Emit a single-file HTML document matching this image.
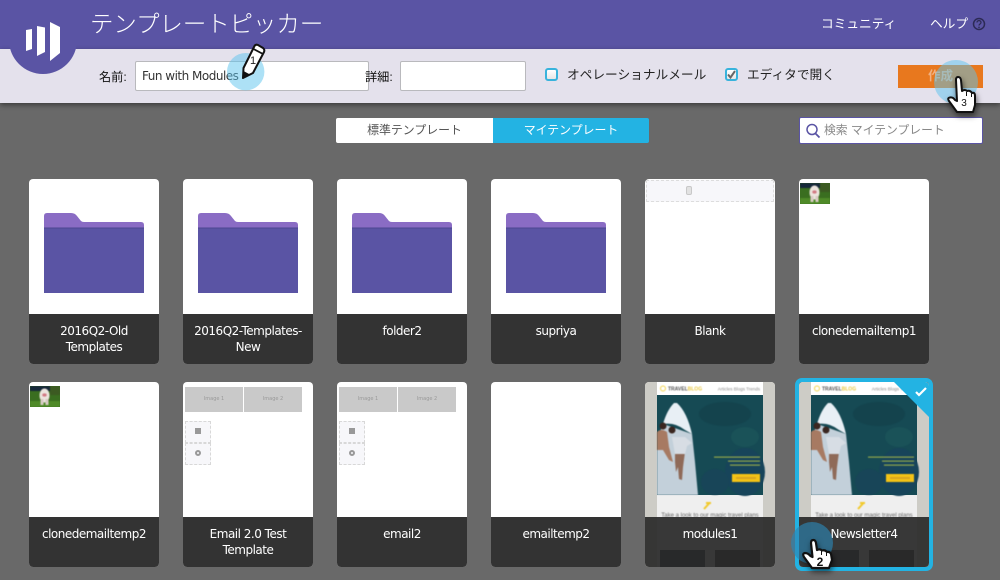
<!DOCTYPE html>
<html lang="ja"><head><meta charset="utf-8"><title>テンプレートピッカー</title>
<style>
*{box-sizing:border-box}
html,body{margin:0;padding:0}
body{width:1000px;height:580px;position:relative;overflow:hidden;background:#696969;font-family:"DejaVu Sans","Noto Sans CJK JP",sans-serif;font-size:12px;color:#222}
.abs{position:absolute;white-space:nowrap}
.jp{font-family:"Liberation Sans","Noto Sans CJK JP",sans-serif}
#hd{position:absolute;left:0;top:0;width:1000px;height:49px;background:#5a54a4}
#bar{position:absolute;left:0;top:49px;width:1000px;height:54px;background:#e4e1ec;box-shadow:0 2px 5px rgba(0,0,0,.45)}
.in{position:absolute;background:#fff;border:1px solid #b9b9bd;border-radius:2px}
.cb{position:absolute;width:13px;height:13px;border:2px solid #38b3dc;border-radius:3px;background:linear-gradient(#fff,#e6e6e6)}
.card{position:absolute;width:130px;height:185px;background:#fff;border-radius:4px;overflow:hidden}
.lb{position:absolute;left:0;right:0;top:135px;height:50px;background:#333;color:#fff;text-align:center;font-size:12px;line-height:16px;padding:9px 0 0;font-family:"DejaVu Sans",sans-serif;letter-spacing:-.5px}
.ov{background:rgba(42,42,42,.93)}
svg{position:absolute;display:block}
.sh{filter:drop-shadow(1px 3px 3px rgba(0,0,0,.55))}
</style></head><body>
<div id="hd"></div>
<div id="bar"></div>

<svg style="left:0;top:0" width="90" height="80" viewBox="0 0 90 80">
<circle cx="43" cy="40" r="34" fill="#5a54a4"/>
<path d="M26 30 L32 29 V49 L26 51Z M37 26 L45 27.500 V52 L37 56Z M50 22 L60 27 V53 L50 61Z" fill="#fff"/>
</svg>

<div class="abs jp" style="left:90px;top:9px;font-size:23.400px;line-height:30px;color:#fff;font-weight:300">テンプレートピッカー</div>
<div class="abs jp" style="left:821px;top:15px;font-size:12.700px;line-height:18px;color:#fff">コミュニティ</div>
<div class="abs jp" style="left:930px;top:15px;font-size:12.700px;line-height:18px;color:#fff">ヘルプ</div>
<svg style="left:972px;top:17px" width="14" height="14" viewBox="0 0 14 14"><circle cx="7" cy="7" r="5.500" fill="none" stroke="#2c2a55" stroke-width="1.500"/><path d="M5 5.500c0-2.500 4-2.500 4 0 0 1.500-2 1.500-2 3" fill="none" stroke="#2c2a55" stroke-width="1.300"/><circle cx="7" cy="10.300" r=".8" fill="#2c2a55"/></svg>

<div class="abs jp" style="left:99px;top:68px;font-size:12.200px;line-height:18px;color:#111">名前:</div>
<div class="in" style="left:135px;top:61px;width:234px;height:30px"></div>
<div class="abs" style="left:142px;top:68px;font-size:12px;line-height:16px;color:#333;letter-spacing:-.5px">Fun with Modules</div>
<div class="abs jp" style="left:365px;top:68px;font-size:12.200px;line-height:18px;color:#111">詳細:</div>
<div class="in" style="left:400px;top:61px;width:126px;height:30px"></div>
<div class="cb" style="left:545px;top:68px"></div>
<div class="abs jp" style="left:567px;top:66px;font-size:12.700px;line-height:18px;color:#222">オペレーショナルメール</div>
<div class="cb" style="left:725px;top:68px"></div>
<svg style="left:725px;top:68px" width="13" height="13" viewBox="0 0 13 13"><path d="M3 6.500 5.500 9.500 10 3" fill="none" stroke="#666" stroke-width="2"/></svg>
<div class="abs jp" style="left:747px;top:66px;font-size:12.700px;line-height:18px;color:#222">エディタで開く</div>
<div class="abs" style="left:898px;top:65px;width:85px;height:23px;background:#e8781e"></div>
<div class="abs jp" style="left:898px;top:66px;width:85px;text-align:center;font-size:12.500px;line-height:20px;color:#f0b183;font-weight:bold">作成</div>

<div class="abs jp" style="left:336px;top:118px;width:157px;height:25px;background:#fff;border-radius:2px 0 0 2px;text-align:center;font-size:11.900px;line-height:25px;color:#555">標準テンプレート</div>
<div class="abs jp" style="left:493px;top:118px;width:156px;height:25px;background:#23b3e3;border-radius:0 2px 2px 0;text-align:center;font-size:11.900px;line-height:25px;color:#fff">マイテンプレート</div>

<div class="abs" style="left:799px;top:117px;width:184px;height:27px;background:#fff;border:1px solid #5a54a4;border-radius:2px"></div>
<svg style="left:804px;top:122px" width="18" height="18" viewBox="0 0 18 18"><circle cx="8" cy="7.500" r="5" fill="none" stroke="#5a54a4" stroke-width="1.500"/><path d="M11.500 11.500 15.500 15.500" stroke="#5a54a4" stroke-width="1.800"/></svg>
<div class="abs jp" style="left:824px;top:121px;font-size:11.800px;line-height:18px;color:#888">検索 マイテンプレート</div>

<svg width="0" height="0" style="position:absolute"><defs>
<symbol id="fold" viewBox="0 0 100 80">
<path d="M0 20V3Q0 0 3 0H27Q31 0 33 3L37 8Q38 9 40 9H97Q100 9 100 12V20Z" fill="#8a6cc4"/>
<path d="M0 15H100V80H0Z" fill="#5a54a4"/><path d="M0 15H100" stroke="#4c4690" stroke-width="1"/>
</symbol>
<symbol id="pig" viewBox="0 0 30 21">
<rect width="30" height="21" fill="#3a6e20"/>
<g style="filter:blur(.6px)">
<rect width="30" height="5" fill="#16283a"/><rect x="20" width="10" height="9" fill="#3c5a22"/><rect y="15" width="30" height="6" fill="#4f8a28"/>
<ellipse cx="14.500" cy="9.500" rx="5" ry="7" fill="#ece4de"/><rect x="10.500" y="13" width="3" height="6" fill="#d8cbc4"/><rect x="15.500" y="13" width="3" height="6" fill="#d8cbc4"/><ellipse cx="14.500" cy="9" rx="2.200" ry="1.600" fill="#d27a84"/>
</g>
</symbol>
<symbol id="mail" viewBox="0 0 130 185">
<rect width="130" height="185" fill="#cdccc6"/>
<rect x="12" y="0" width="106" height="13" fill="#fff"/>
<rect x="12" y="13" width="106" height="100" fill="#164a54"/>
<rect x="12" y="113" width="106" height="72" fill="#efefef"/>
<g style="filter:blur(.5px)">
<circle cx="18" cy="6.500" r="2.500" fill="none" stroke="#f3d54e"/>
<text x="23" y="8.500" font-family="Liberation Sans, sans-serif" font-size="5" font-weight="bold" fill="#555">TRAVEL<tspan fill="#e9c944">BLOG</tspan></text>
<text x="115" y="8.500" text-anchor="end" font-family="Liberation Sans, sans-serif" font-size="4.500" fill="#888">Articles Blogs Trends</text>
<ellipse cx="80" cy="32" rx="26" ry="12" fill="#14434d"/><ellipse cx="100" cy="90" rx="20" ry="24" fill="#17445a"/><ellipse cx="70" cy="100" rx="14" ry="13" fill="#184558"/><ellipse cx="100" cy="55" rx="14" ry="10" fill="#1a5258"/>
<path d="M12 58 L18 42 L47 52 L50 80 L53 113 H12Z" fill="#c3d0da"/>
<path d="M18 42 Q22 28 29 21 L32 21 Q42 30 47 52 L40 48 Q30 40 18 42Z" fill="#e8eff5"/>
<path d="M12 50 Q16 46 22 50 L24 65 L28 80 L24 78 L18 68 L12 68Z" fill="#a77a62"/>
<circle cx="18" cy="44" r="3.500" fill="#3a2620"/><circle cx="27" cy="48" r="3.500" fill="#3a2620"/>
<path d="M30 70 L40 70 L38 85 L37 98 L34 97 L33 85 L31 90 L30 80Z" fill="#8f6a58"/>
<path d="M27 55 L40 55 L47 61 L42 64 L40 72 L30 72Z" fill="#d7dde4"/>
<rect x="69" y="74.500" width="46" height="1.200" fill="#8fa64c"/><rect x="83" y="78.500" width="32" height="1.200" fill="#8fa64c"/><rect x="85" y="82.500" width="30" height="1.200" fill="#8fa64c"/>
<rect x="87" y="92" width="28" height="8" fill="#f3c316"/><rect x="91" y="95" width="20" height="2" fill="#d9a520"/>
<path d="M59 127 64.500 121" stroke="#f1c92c" stroke-width="2"/><rect x="61" y="120" width="5" height="2" fill="#f1c92c"/>
<text x="65" y="135" text-anchor="middle" font-family="Liberation Sans, sans-serif" font-size="6" fill="#666">Take a look to our magic travel plans</text>
</g>
<rect x="15" y="168" width="45" height="17" fill="#14202a"/><rect x="70" y="168" width="45" height="17" fill="#24241f"/>
</symbol>
</defs></svg>

<div class="card" style="left:29px;top:179px"><svg style="left:15px;top:34px" width="100" height="80"><use href="#fold"/></svg><div class="lb">2016Q2-Old<br>Templates</div></div>
<div class="card" style="left:183px;top:179px"><svg style="left:15px;top:34px" width="100" height="80"><use href="#fold"/></svg><div class="lb">2016Q2-Templates-<br>New</div></div>
<div class="card" style="left:337px;top:179px"><svg style="left:15px;top:34px" width="100" height="80"><use href="#fold"/></svg><div class="lb">folder2</div></div>
<div class="card" style="left:491px;top:179px"><svg style="left:15px;top:34px" width="100" height="80"><use href="#fold"/></svg><div class="lb">supriya</div></div>
<div class="card" style="left:645px;top:179px">
<div class="abs" style="left:1px;top:1px;width:128px;height:22px;background:#f7f7fa;border:1px dashed #ddd"></div>
<div class="abs" style="left:41px;top:7px;width:6px;height:9px;background:#e2e2e2;border:1px solid #c8c8c8;border-radius:2px"></div>
<div class="lb">Blank</div></div>
<div class="card" style="left:799px;top:179px"><svg style="left:1px;top:4px" width="30" height="21"><use href="#pig"/></svg><div class="lb">clonedemailtemp1</div></div>

<div class="card" style="left:29px;top:382px"><svg style="left:1px;top:4px" width="30" height="21"><use href="#pig"/></svg><div class="lb">clonedemailtemp2</div></div>
<div class="card tpl" style="left:183px;top:382px">
<div class="abs" style="left:2px;top:5px;width:58px;height:25px;background:#c9c9c9;text-align:center;font-size:5px;line-height:25px;color:#999">Image 1</div>
<div class="abs" style="left:61px;top:5px;width:58px;height:25px;background:#c9c9c9;text-align:center;font-size:5px;line-height:25px;color:#999">Image 2</div>
<div class="abs" style="left:2px;top:39px;width:26px;height:22px;background:#f7f7fa;border:1px dashed #d8d8d8"></div>
<div class="abs" style="left:2px;top:61px;width:26px;height:22px;background:#f7f7fa;border:1px dashed #d8d8d8"></div>
<div class="abs" style="left:12px;top:46px;width:6px;height:6px;background:#999"></div>
<div class="abs" style="left:12px;top:68px;width:6px;height:6px;border:2px solid #999;border-radius:50%"></div>
<div class="lb">Email 2.0 Test<br>Template</div></div>
<div class="card" style="left:337px;top:382px">
<div class="abs" style="left:2px;top:5px;width:58px;height:25px;background:#c9c9c9;text-align:center;font-size:5px;line-height:25px;color:#999">Image 1</div>
<div class="abs" style="left:61px;top:5px;width:58px;height:25px;background:#c9c9c9;text-align:center;font-size:5px;line-height:25px;color:#999">Image 2</div>
<div class="abs" style="left:2px;top:39px;width:26px;height:22px;background:#f7f7fa;border:1px dashed #d8d8d8"></div>
<div class="abs" style="left:2px;top:61px;width:26px;height:22px;background:#f7f7fa;border:1px dashed #d8d8d8"></div>
<div class="abs" style="left:12px;top:46px;width:6px;height:6px;background:#999"></div>
<div class="abs" style="left:12px;top:68px;width:6px;height:6px;border:2px solid #999;border-radius:50%"></div>
<div class="lb">email2</div></div>
<div class="card" style="left:491px;top:382px"><div class="lb">emailtemp2</div></div>
<div class="card" style="left:645px;top:382px"><svg style="left:0;top:0" width="130" height="185"><use href="#mail"/></svg><div class="lb ov">modules1</div></div>
<div class="abs" style="left:795px;top:378px;width:138px;height:193px;border:4px solid #23b3e3;border-radius:7px"></div>
<div class="card" style="left:799px;top:382px"><svg style="left:0;top:0" width="130" height="185"><use href="#mail"/></svg>
<svg style="left:95px;top:0" width="35" height="35" viewBox="0 0 35 35"><path d="M0 0H35V35Z" fill="#23b3e3"/><path d="M22 10 25 13 32 6" fill="none" stroke="#fff" stroke-width="2.200"/></svg>
<div class="lb ov">Newsletter4</div></div>

<!-- hotspot 1 -->
<svg style="left:225px;top:40px" width="50" height="55" viewBox="0 0 50 55">
<circle cx="20.700" cy="31.700" r="18.700" fill="#5cc4ee" fill-opacity=".5"/>
<path d="M18 38 L18.500 28 L29.500 6 Q30.500 4 33 5 L38 8 Q40 9.500 39 12 L28 33Z" fill="#fff" stroke="#111" stroke-width="2" stroke-linejoin="round"/>
<path d="M18 38 L18.500 31 L25 34.500Z" fill="#111"/><path d="M28.500 9 38 14" stroke="#111" stroke-width="1.800"/>
<text x="28" y="24" font-family="Liberation Sans, sans-serif" font-size="11" fill="#222" text-anchor="middle">1</text>
</svg>
<!-- hotspot 2 -->
<svg style="left:785px;top:510px;overflow:visible" width="60" height="70" viewBox="0 0 60 70">
<circle cx="27" cy="33" r="21" fill="#2c86b4" fill-opacity=".65"/>
<path class="sh" d="M27 58 L19 47 Q17 43.500 20 43 Q23 43 25.500 46 L27.500 47 L26 33 Q26 30 28.300 30 Q30.500 30 31 33 L32 40 Q35 38.500 37 40.500 Q40 39.500 42 42 Q45 41.500 46 44 L47 50 L44 58Z" fill="#fff" stroke="#111" stroke-width="2.200" stroke-linejoin="round"/>
<path d="M36.500 41V45M41.500 42.500V46" stroke="#111" stroke-width="1"/>
<text x="35" y="56" font-family="Liberation Sans, sans-serif" font-size="12" fill="#111" text-anchor="middle" font-weight="bold">2</text>
</svg>
<!-- hotspot 3 -->
<svg style="left:930px;top:55px;overflow:visible" width="60" height="60" viewBox="0 0 60 60">
<circle cx="26" cy="27" r="22" fill="#5cc4ee" fill-opacity=".5"/>
<path class="sh" d="M27 57 L19 46 Q17 43 20 42.500 Q23 42 25 45 L27 46 L26 25 Q26 22 28 22 Q30.500 22 31 25 L32 36 Q35 34 37 36 Q40 35 42 38 Q45 37 45 41 L45 50 L43 57Z" fill="#fff" stroke="#111" stroke-width="2" stroke-linejoin="round"/>
<path d="M36.500 37V41M41.500 38.500V42" stroke="#111" stroke-width="1"/>
<text x="34" y="51" font-family="Liberation Sans, sans-serif" font-size="10" fill="#111" text-anchor="middle">3</text>
</svg>
</body></html>
